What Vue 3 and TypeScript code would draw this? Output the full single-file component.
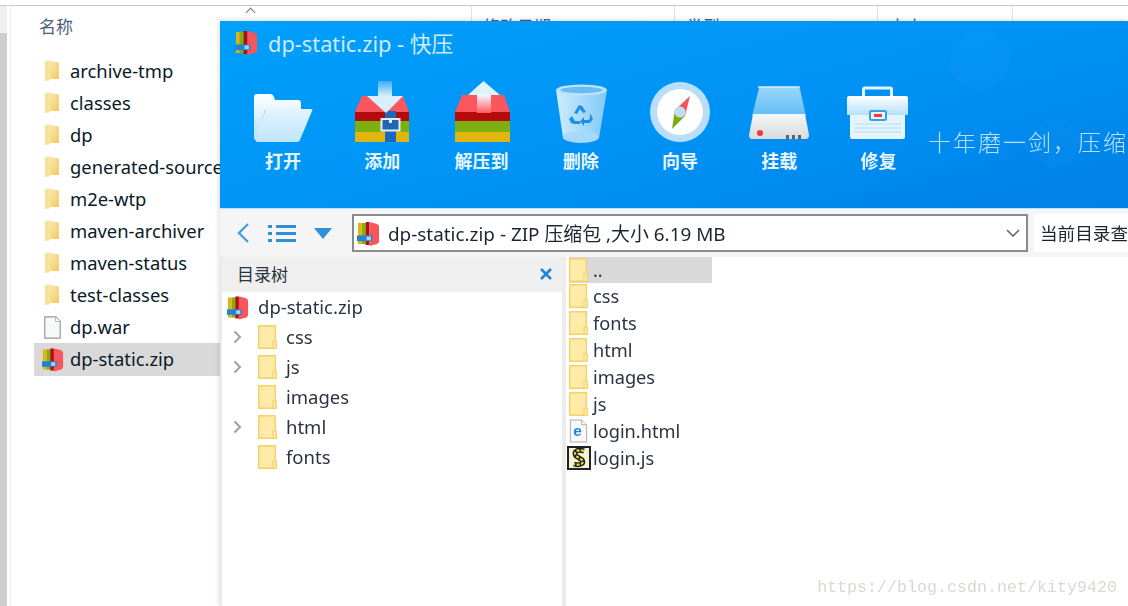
<script setup lang="ts">
const explorerRows = ['archive-tmp', 'classes', 'dp', 'generated-sources', 'm2e-wtp', 'maven-archiver', 'maven-status', 'test-classes']
const treeRows = [
  { name: 'css', arrow: true },
  { name: 'js', arrow: true },
  { name: 'images', arrow: false },
  { name: 'html', arrow: true },
  { name: 'fonts', arrow: false },
]
const listRows = [
  { name: '..', icon: 'pale', h: 26 },
  { name: 'css', icon: 'pale', h: 27 },
  { name: 'fonts', icon: 'pale', h: 27 },
  { name: 'html', icon: 'pale', h: 27 },
  { name: 'images', icon: 'pale', h: 27 },
  { name: 'js', icon: 'pale', h: 27 },
  { name: 'login.html', icon: 'ie', h: 27 },
  { name: 'login.js', icon: 'js', h: 27 },
]
const tools = [
  { label: '打开', icon: 'open' },
  { label: '添加', icon: 'add' },
  { label: '解压到', icon: 'extract' },
  { label: '删除', icon: 'bin' },
  { label: '向导', icon: 'compass' },
  { label: '挂载', icon: 'drive' },
  { label: '修复', icon: 'box' },
]
</script>

<template>
  <div class="page">
    <svg class="defs" width="0" height="0">
      <defs>
        <linearGradient id="gFolder" x1="0" y1="0" x2="1" y2="1">
          <stop offset="0" stop-color="#fdeaa8" /><stop offset="1" stop-color="#efc868" />
        </linearGradient>
        <linearGradient id="gWhite" x1="0" y1="0" x2="0" y2="1">
          <stop offset="0" stop-color="#ffffff" /><stop offset="1" stop-color="#b5e0fb" />
        </linearGradient>
        <linearGradient id="gFront" x1="0" y1="0" x2="0" y2="1">
          <stop offset="0" stop-color="#e3f4fe" /><stop offset="1" stop-color="#bfe5fb" />
        </linearGradient>
        <linearGradient id="gArrowDown" x1="0" y1="0" x2="0" y2="1">
          <stop offset="0" stop-color="#3fadf4" /><stop offset="1" stop-color="#d8f0fd" />
        </linearGradient>
        <linearGradient id="gArrowUp" x1="0" y1="0" x2="0" y2="1">
          <stop offset="0" stop-color="#f0f9ff" /><stop offset="1" stop-color="#ff5a60" />
        </linearGradient>
        <linearGradient id="gBin" x1="0" y1="0" x2="1" y2="0">
          <stop offset="0" stop-color="#e6f5fe" /><stop offset="1" stop-color="#8fd0f8" />
        </linearGradient>
        <linearGradient id="gDrive" x1="0" y1="0" x2="0" y2="1">
          <stop offset="0" stop-color="#9bd6fb" /><stop offset="1" stop-color="#62bdf6" />
        </linearGradient>
        <linearGradient id="gDriveBase" x1="0" y1="0" x2="0" y2="1">
          <stop offset="0" stop-color="#f4f6f8" /><stop offset="1" stop-color="#d8dadc" />
        </linearGradient>
        <symbol id="zip" viewBox="0 0 24 26">
          <path d="M1 2h4v22H1z" fill="#e2b30f" />
          <path d="M5 2h4v22H5z" fill="#7fb010" />
          <path d="M9 1h4v24H9z" fill="#b50d0d" />
          <path d="M13 1l8 2q2 1 2 3v15q0 2-2 3l-8 2z" fill="#f6565c" />
          <path d="M0 15h16v6H0z" fill="#1f83d8" />
          <path d="M10 16h4.500v4H10z" fill="#a9d3f2" />
        </symbol>
        <symbol id="side" viewBox="0 0 16 22">
          <path d="M1 1l5 1v18l-5 1z" fill="#fae7a4" />
          <path d="M6 2h9v17H6l-2 2z" fill="url(#gFolder)" />
          <path d="M1 1h8v2H6v17l-5 1z" fill="#f9e39a" />
        </symbol>
        <symbol id="pale" viewBox="0 0 19 24">
          <path d="M.7.7h16.600v22.600H.7z" fill="#ffeaa8" stroke="#f4d266" stroke-width="1.400" />
          <path d="M15 16h3.300v7.300H15z" fill="#ffeaa8" stroke="#f4d266" stroke-width="1.200" />
        </symbol>
        <symbol id="ie" viewBox="0 0 19 25">
          <path d="M1 1h12l5 5v18H1z" fill="#f7f9fb" stroke="#a8a8a8" />
          <path d="M13 1v5h5" fill="#fff" stroke="#a8a8a8" />
          <text x="4" y="18" font-size="16" font-weight="700" fill="#1d86e0" font-family="Liberation Sans">e</text>
        </symbol>
        <symbol id="js" viewBox="0 0 24 24">
          <path d="M1 1h22v22H1z" fill="#f5f3d6" stroke="#222" stroke-width="2" />
          <path d="M17 5C10 3 6 6 9 10l6 4c3 3-2 6-8 4" fill="none" stroke="#1a1a1a" stroke-width="5" />
          <path d="M17 5C10 3 6 6 9 10l6 4c3 3-2 6-8 4" fill="none" stroke="#eadb28" stroke-width="2.200" stroke-dasharray="3 1.500" />
        </symbol>
        <symbol id="open" viewBox="0 0 64 64">
          <path d="M3 17q0-3 3-3h13q3 0 4 3l1 3h23q3 0 3 3v7H14L6 60q-3 1-3-3z" fill="url(#gWhite)" />
          <path d="M14 31q.5-2 2-2h44q2 0 1 2L49 60q-.6 2-3 2H7q-3 0-2-3z" fill="url(#gFront)" />
        </symbol>
        <symbol id="add" viewBox="0 0 64 64">
          <path d="M12 16h41l6 16v9H5v-9z" fill="#f9565d" />
          <path d="M5 32h54v9H5z" fill="#b60909" />
          <path d="M5 41h54v11H5z" fill="#7db00e" />
          <path d="M5 52h54v10H5z" fill="#e0b50d" />
          <path d="M35 31h11v31H35z" fill="#1668c0" />
          <path d="M28 1h14v15H28z" fill="url(#gArrowDown)" />
          <path d="M17 16h36L36 33z" fill="#d8f0fd" />
          <rect x="31.500" y="39" width="18" height="11.500" fill="#2166b5" stroke="#e6ecf0" stroke-width="2" />
          <path d="M39 39h3v4h-3z" fill="#e6ecf0" />
        </symbol>
        <symbol id="extract" viewBox="0 0 64 64">
          <path d="M12 15h42l6 17v9H5v-9z" fill="#f9565d" />
          <path d="M5 32h55v9H5z" fill="#b60909" />
          <path d="M5 41h55v11H5z" fill="#7db00e" />
          <path d="M5 52h55v10H5z" fill="#e0b50d" />
          <path d="M33.500 1L50 15H18z" fill="#dff3fe" />
          <path d="M27 15h14v18H27z" fill="url(#gArrowUp)" />
        </symbol>
        <symbol id="bin" viewBox="0 0 64 64">
          <path d="M7 10L14 58q6 5 36 0l8-48z" fill="url(#gBin)" opacity=".9" />
          <ellipse cx="32.500" cy="10" rx="25.500" ry="5.500" fill="#bfe3fb" />
          <ellipse cx="32.500" cy="10" rx="21" ry="3.200" fill="#68bdf6" />
          <ellipse cx="32" cy="57" rx="18" ry="6" fill="#a7d9fa" />
          <path d="M33 26l4 6-3 1-3-4-3 5-3-1 5-8z M41 33l3 6-3 4h-6v3l-4-4.500 4-4.500v3h5l1-3zM23 36l3 5h5v3h-6l-3-1-2-4z" fill="#1e8fe6" />
        </symbol>
        <symbol id="compass" viewBox="0 0 64 64">
          <circle cx="32" cy="32" r="30" fill="#b9defa" />
          <circle cx="32" cy="32" r="23" fill="#fff" />
          <path d="M42 16L37 36l-9-7z" fill="#f0555a" />
          <path d="M24 49l3-20 10 7z" fill="#7bac12" />
          <circle cx="32" cy="32" r="5.500" fill="#bcdff5" />
        </symbol>
        <symbol id="drive" viewBox="0 0 64 64">
          <path d="M12 8q1-1 3-1h34q3 0 4 2l6 27H5z" fill="url(#gDrive)" />
          <path d="M11 7h42" stroke="#d9f0ff" stroke-width="1.500" />
          <path d="M6 34h52l4 21q0 4-3 4H5q-3 0-3-4z" fill="url(#gDriveBase)" />
          <circle cx="13" cy="53" r="3" fill="#f0393f" />
          <path d="M39 55h3v4h-3zM45 55h3v4h-3zM51 55h3v4h-3z" fill="#5e6368" />
        </symbol>
        <symbol id="box" viewBox="0 0 64 64">
          <rect x="17.500" y="8" width="28" height="12" rx="1.500" fill="none" stroke="#e6f4fe" stroke-width="3" />
          <path d="M3 16h57q2 0 2 2v17H1V18q0-2 2-2z" fill="url(#gWhite)" />
          <path d="M4 35h55v22q0 2-2 2H6q-2 0-2-2z" fill="#e6f4fe" />
          <path d="M8 44h47M8 48h47M8 52h47" stroke="#b2dcf8" stroke-width="1.200" />
          <rect x="24" y="31" width="16" height="9" rx="1.500" fill="#e6f4fe" stroke="#3b9fe8" stroke-width="2" />
          <rect x="28" y="34" width="8" height="3" fill="#f0393f" />
        </symbol>
      </defs>
    </svg>

    <div class="explorer">
      <div class="gutter"><div class="thumb"></div></div>
      <div class="files">
        <div class="head">
          <span class="col col-name">名称<i class="caret"></i></span>
          <span class="col col-date">修改日期</span>
          <span class="col col-type">类型</span>
          <span class="col col-size">大小</span>
          <span class="col col-rest"></span>
        </div>
        <div class="rows">
          <div v-for="r in explorerRows" :key="r" class="row">
            <svg class="side-icon"><use href="#side" /></svg><span class="row-text">{{ r }}</span>
          </div>
          <div class="row">
            <svg class="doc-icon" viewBox="0 0 17 23">
              <path d="M.8.800h11l4.400 4.400v17H.8z" fill="#f7f8fa" stroke="#9a9a9a" stroke-width="1.200" />
              <path d="M11.500 1v4.500H16" fill="#fff" stroke="#bbb" />
            </svg><span class="row-text">dp.war</span>
          </div>
          <div class="row row-sel">
            <svg class="zip-icon"><use href="#zip" /></svg><span class="row-text">dp-static.zip</span>
          </div>
        </div>
      </div>
    </div>

    <section class="win">
      <header class="hero">
        <div class="title">
          <svg class="title-icon"><use href="#zip" /></svg>
          <span>dp-static.zip - 快压</span>
        </div>
        <div class="tools">
          <div v-for="t in tools" :key="t.icon" class="tool">
            <svg class="tool-icon"><use :href="'#' + t.icon" /></svg>
            <span class="tool-label">{{ t.label }}</span>
          </div>
          <div class="slogan">十年磨一剑，压缩</div>
        </div>
      </header>

      <div class="nav">
        <svg class="nav-back" viewBox="0 0 14 22"><path d="M12 2L3 11l9 9" fill="none" stroke="#4a9fdc" stroke-width="2.400" /></svg>
        <svg class="nav-list" viewBox="0 0 28 19">
          <path d="M0 1h4v3H0zM0 8h4v3H0zM0 15h4v3H0zM8 1h20v3H8zM8 8h20v3H8zM8 15h20v3H8z" fill="#2f8fd8" />
        </svg>
        <svg class="nav-drop" viewBox="0 0 18 11"><path d="M0 0h18L9 11z" fill="#2f8fd8" /></svg>
        <div class="combo">
          <svg class="combo-icon"><use href="#zip" /></svg>
          <span class="combo-text">dp-static.zip - ZIP 压缩包 ,大小 6.19 MB</span>
          <svg class="combo-arrow" viewBox="0 0 14 8"><path d="M1 1l6 6 6-6" fill="none" stroke="#666" stroke-width="1.600" /></svg>
        </div>
        <div class="search">当前目录查</div>
      </div>

      <div class="panes">
        <aside class="tree">
          <div class="tree-head">
            <span>目录树</span>
            <svg class="close" viewBox="0 0 14 14"><path d="M2 2l10 10M12 2L2 12" stroke="#1d86d8" stroke-width="2.600" /></svg>
          </div>
          <div class="tree-root">
            <svg class="zip-icon root-icon"><use href="#zip" /></svg><span class="tree-text">dp-static.zip</span>
          </div>
          <div v-for="t in treeRows" :key="t.name" class="tree-row">
            <svg class="tree-arrow" viewBox="0 0 9 14">
              <path v-if="t.arrow" d="M1.500 1.500L7 7l-5.500 5.500" fill="none" stroke="#a0a0a0" stroke-width="2" />
            </svg>
            <svg class="tree-folder"><use href="#pale" /></svg><span class="tree-text">{{ t.name }}</span>
          </div>
        </aside>
        <div class="split"></div>
        <main class="list">
          <div
            v-for="(l, i) in listRows"
            :key="l.name"
            class="list-row"
            :class="{ 'list-sel': i === 0 }"
            :style="{ height: l.h + 'px' }"
          >
            <svg class="list-icon" :class="{ 'list-js': l.icon === 'js' }"><use :href="'#' + l.icon" /></svg>{{ l.name }}
          </div>
        </main>
      </div>
    </section>

    <div class="mark">https://blog.csdn.net/kity9420</div>
  </div>
</template>

<style>
html, body { margin: 0; background: #fff; }
</style>

<style scoped>
.page {
  position: relative;
  width: 1128px;
  height: 606px;
  overflow: hidden;
  background: #fff;
  font-family: "Noto Sans", "Noto Sans CJK SC", sans-serif;
  color: #10202c;
}
.defs { position: absolute; }
.explorer { display: flex; height: 606px; padding-top: 5px; box-sizing: border-box; border-top: 0; }
.gutter {
  width: 7px;
  height: 100%;
  background: #f0f0f0;
  border-top: 1px solid #c6c6c6;
  box-sizing: border-box;
}
.thumb { height: 100%; margin-top: 27px; background: #cdcdcd; }
.files { flex: 1; border-top: 1px solid #c6c6c6; border-left: 3px solid #fff; box-shadow: inset 1px 0 0 #f0f0f0; }
.head { display: flex; height: 49px; }
.col { box-sizing: border-box; padding-left: 11px; height: 15px; font-size: 17px; line-height: 42px; color: #4c607a; white-space: nowrap; border-right: 1px solid #e3e3e3; }
.col-name { position: relative; width: 462px; padding-left: 29px; height: 15px; }
.col-date { width: 203px; }
.col-type { width: 203px; }
.col-size { width: 135px; }
.col-rest { flex: 1; border-right: 0; }
.caret {
  position: absolute;
  left: 237px;
  top: 3px;
  width: 6px;
  height: 6px;
  border-left: 1px solid #777;
  border-top: 1px solid #777;
  transform: rotate(45deg);
}
.rows { width: 186px; margin-left: 24px; }
.row {
  display: flex;
  align-items: center;
  height: 32px;
  font-size: 18.400px;
  white-space: nowrap;
  padding-left: 8px;
  color: #0a1a28;
}
.row-text { padding-bottom: 2px; }
.row-sel { background: #d9d9d9; width: 186px; box-sizing: border-box; height: 33px; }
.side-icon { width: 16px; height: 22px; margin-right: 10px; flex: none; margin-left: 2px; }
.doc-icon { width: 17px; height: 23px; margin-right: 9px; margin-left: 2px; flex: none; }
.zip-icon { width: 22px; height: 25px; margin-right: 6px; flex: none; }
.root-icon { margin-right: 9px; }

.win {
  position: absolute;
  left: 220px;
  top: 21px;
  width: 908px;
  height: 585px;
  display: flex;
  flex-direction: column;
  background: #fff;
  box-shadow: -1px -1px 5px rgba(0, 0, 0, .14);
  filter: blur(.4px);
}
.hero {
  height: 187px;
  flex: none;
  background:
    radial-gradient(circle at 760px 40px, rgba(255,255,255,.014) 30px, transparent 31px),
    radial-gradient(circle at 837px 122px, rgba(255,255,255,.014) 24px, transparent 25px),
    linear-gradient(165deg, #00a0fb 0%, #0092f5 55%, #0080e6 100%);
  border-bottom: 1px solid #bfe0f8;
  box-sizing: content-box;
}
.title { display: flex; align-items: center; height: 43px; padding: 0 0 0 15px; font-size: 21.800px; color: #cfeaff; }
.title-icon { width: 23px; height: 25px; margin-right: 10px; }
.tools { display: flex; padding-left: 13.500px; height: 144px; }
.tool { width: 99.500px; display: flex; flex-direction: column; align-items: center; }
.tool-icon { width: 64px; height: 64px; margin-top: 16px; flex: none; }
.tool-label { font-size: 18px; font-weight: 700; line-height: 24px; margin-top: 5px; color: #e8f6ff; white-space: nowrap; }
.slogan {
  font-size: 23px;
  letter-spacing: 2px;
  margin-top: 60px;
  height: 32px;
  color: rgba(225, 244, 255, .82);
  white-space: nowrap;
  font-weight: 300;
  font-family: "Noto Sans CJK SC", sans-serif;
}
.nav {
  display: flex;
  align-items: center;
  height: 48px;
  flex: none;
  background: #f5f5f5;
}
.nav-back { width: 14px; height: 22px; margin-left: 16px; }
.nav-list { width: 28px; height: 19px; margin-left: 18px; }
.nav-drop { width: 18px; height: 11px; margin-left: 18px; }
.combo {
  display: flex;
  align-items: center;
  box-sizing: border-box;
  width: 676px;
  height: 38px;
  margin-left: 20px;
  background: #fff;
  border: 2px solid #8a8a8a;
  padding-left: 3px;
  font-size: 18.900px;
  color: #1b2530;
}
.combo-icon { width: 23px; height: 25px; margin-right: 8px; flex: none; }
.combo-text { flex: 1; white-space: nowrap; padding-bottom: 1px; }
.combo-arrow { width: 14px; height: 8px; margin-right: 6px; }
.search {
  margin-left: 6px;
  flex: 1;
  height: 38px;
  background: #fff;
  font-size: 17.600px;
  line-height: 38px;
  padding-left: 6px;
  white-space: nowrap;
  overflow: hidden;
  color: #1b2530;
}
.panes { flex: 1; display: flex; border-left: 2px solid #eaeaea; }
.tree { width: 340px; flex: none; background: #fff; font-size: 18.500px; color: #2a3440; }
.tree-head {
  display: flex;
  align-items: center;
  justify-content: space-between;
  box-sizing: border-box;
  height: 35px;
  background: #efefef;
  padding: 0 7px 2px 15px;
  font-size: 17px;
}
.close { width: 14px; height: 14px; margin-right: 2px; }
.tree-root { display: flex; align-items: center; height: 30px; padding-left: 5px; white-space: nowrap; }
.tree-row { display: flex; align-items: center; height: 30px; white-space: nowrap; }
.tree-text { padding-bottom: 2px; }
.tree-arrow { width: 9px; height: 14px; margin-left: 11px; margin-right: 16px; flex: none; }
.tree-folder { width: 19px; height: 24px; margin-right: 9px; flex: none; }
.split { width: 4px; flex: none; background: #ececec; }
.list { flex: 1; background: #fff; font-size: 18.200px; color: #2a3440; padding-left: 3px; }
.list-row { display: flex; align-items: center; box-sizing: border-box; padding-bottom: 1px; width: 143px; white-space: nowrap; }
.list-sel { background: #d9d9d9; }
.list-icon { width: 19px; height: 24px; margin-right: 5px; flex: none; }
.list-js { width: 24px; height: 24px; margin-left: -2px; margin-right: 2px; }
.mark {
  position: absolute;
  right: 11px;
  bottom: 9px;
  font-family: "Liberation Mono", monospace;
  font-size: 16.670px;
  color: #d9d9d2;
  white-space: nowrap;
}
</style>
